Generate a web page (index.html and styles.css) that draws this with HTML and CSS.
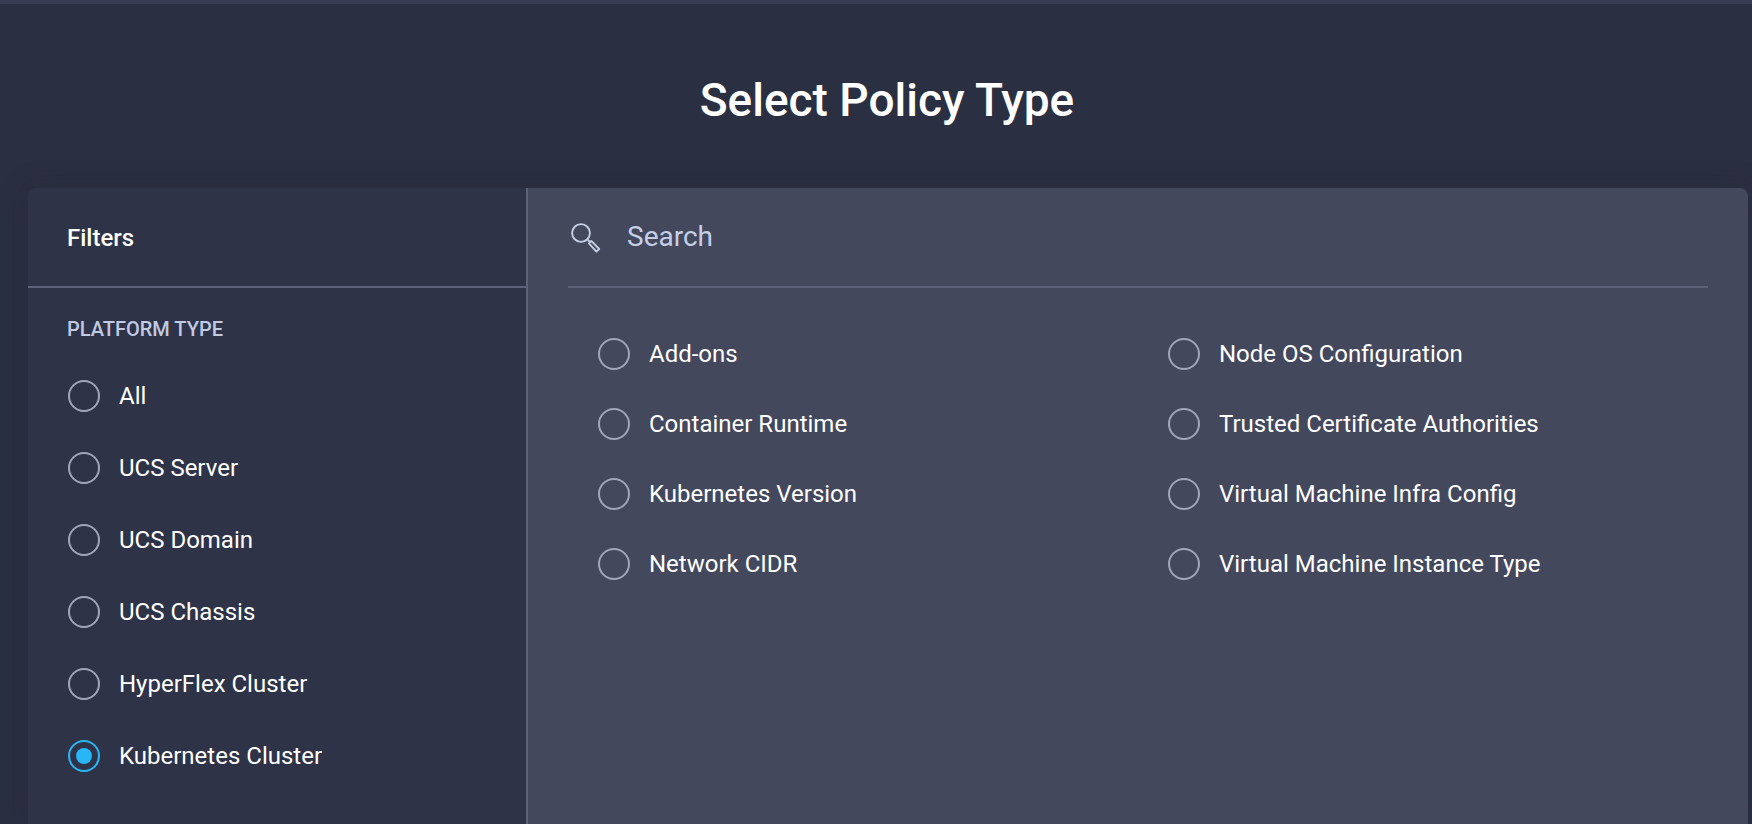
FILE: index.html
```html
<!DOCTYPE html>
<html lang="en">
<head>
<meta charset="utf-8">
<title>Select Policy Type</title>
<link rel="stylesheet" href="styles.css">
</head>
<body>
<main class="page">
  <h1 class="title">Select Policy Type</h1>
  <div class="panel">
    <aside class="sidebar">
      <h2 class="filters">Filters</h2>
      <div class="group">Platform Type</div>
      <ul class="platforms">
        <li class="option"><span class="radio"></span><span>All</span></li>
        <li class="option"><span class="radio"></span><span>UCS Server</span></li>
        <li class="option"><span class="radio"></span><span>UCS Domain</span></li>
        <li class="option"><span class="radio"></span><span>UCS Chassis</span></li>
        <li class="option"><span class="radio"></span><span>HyperFlex Cluster</span></li>
        <li class="option"><span class="radio checked"></span><span>Kubernetes Cluster</span></li>
      </ul>
    </aside>
    <section class="content">
      <div class="search">
        <svg class="search-icon" viewBox="0 0 30 31" fill="none" stroke="currentColor" stroke-width="1.9" stroke-linejoin="round"><circle cx="10" cy="11" r="8.9"/><path d="M16.4 17.3l2.4 2.6M20.3 18.9l7.9 8.1-2.8 2.6-7.5-8.3z"/></svg>
        <span class="search-label">Search</span>
      </div>
      <ul class="policies">
        <li class="option"><span class="radio"></span><span>Add-ons</span></li>
        <li class="option"><span class="radio"></span><span>Container Runtime</span></li>
        <li class="option"><span class="radio"></span><span>Kubernetes Version</span></li>
        <li class="option"><span class="radio"></span><span>Network CIDR</span></li>
        <li class="option"><span class="radio"></span><span>Node OS Configuration</span></li>
        <li class="option"><span class="radio"></span><span>Trusted Certificate Authorities</span></li>
        <li class="option"><span class="radio"></span><span>Virtual Machine Infra Config</span></li>
        <li class="option"><span class="radio"></span><span>Virtual Machine Instance Type</span></li>
      </ul>
    </section>
  </div>
</main>
</body>
</html>
```
FILE: styles.css
```css
* { box-sizing: border-box; }
body { margin: 0; background: #2b2f42; color: #fff; font-family: Roboto, sans-serif; font-size: 24px; }
ul { list-style: none; margin: 0; padding: 0; }
.page { height: 824px; border-top: 4px solid #373c54; overflow: hidden; display: flex; flex-direction: column; padding: 0 4px 0 28px; }
.title { margin: 0; height: 184px; padding-right: 2px; font-size: 46px; font-weight: 500; line-height: 192px; text-align: center; flex: none; }
.panel { flex: 1; display: flex; border-radius: 8px 8px 0 0; overflow: hidden; box-shadow: 0 2px 28px rgba(34, 38, 55, .35); }
.sidebar { width: 500px; flex: none; background: #2e3347; border-right: 2px solid #5d6278; }
.filters { margin: 0; height: 100px; padding-left: 39px; border-bottom: 2px solid #5d6278; font-size: 24px; font-weight: 500; line-height: 100px; }
.group { margin: 28px 0 0 39px; height: 28px; line-height: 26px; font-size: 20px; font-weight: 500; color: #c0cae2; text-transform: uppercase; }
.platforms { padding: 16px 0 0 40px; display: grid; grid-auto-rows: 72px; }
.option { display: flex; align-items: center; gap: 19px; white-space: nowrap; }
.radio { width: 32px; height: 32px; border: 2px solid #a1a6ba; border-radius: 50%; flex: none; display: grid; place-items: center; }
.checked { border-color: #29b6f6; }
.checked::after { content: ""; width: 16px; height: 16px; border-radius: 50%; background: #29b6f6; }
.content { flex: 1; background: #43485d; padding: 0 40px; }
.search { height: 100px; border-bottom: 2px solid #5d6278; display: flex; align-items: center; gap: 26px; padding-left: 3px; font-size: 28px; color: #c5cfe6; }
.search-icon { width: 30px; height: 31px; }
.search-label { padding-bottom: 2px; }
.policies { display: grid; grid-template-columns: 570px 510px; grid-template-rows: repeat(4, 70px); grid-auto-flow: column; padding: 31px 0 0 30px; }
```
